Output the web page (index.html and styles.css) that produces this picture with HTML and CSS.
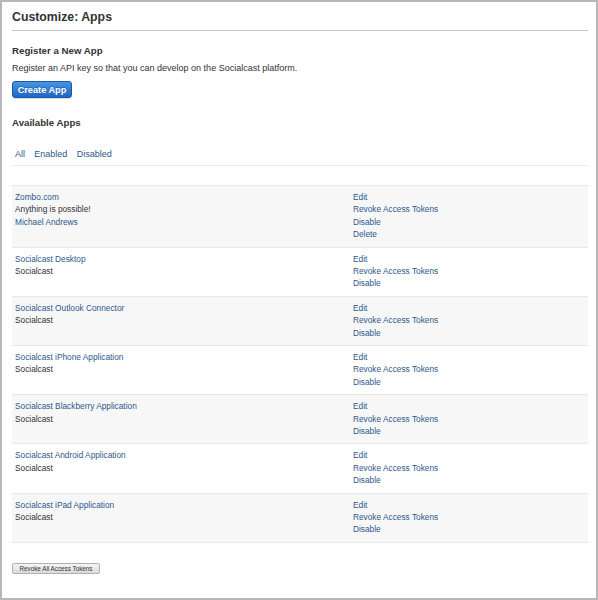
FILE: index.html
```html
<!DOCTYPE html>
<html>
<head>
<meta charset="utf-8">
<link rel="stylesheet" href="styles.css">
</head>
<body>
<div class="frame">
  <h1 class="title">Customize: Apps</h1>
  <h2 class="section first">Register a New App</h2>
  <p class="desc">Register an API key so that you can develop on the Socialcast platform.</p>
  <button class="btn-primary">Create App</button>
  <h2 class="section second">Available Apps</h2>
  <nav class="filters"><a href="#">All</a><a href="#">Enabled</a><a href="#">Disabled</a></nav>
  <div class="apps">
    <div class="app alt">
      <div class="info"><a href="#">Zombo.com</a><span>Anything is possible!</span><a href="#">Michael Andrews</a></div>
      <div class="actions"><a href="#">Edit</a><a href="#">Revoke Access Tokens</a><a href="#">Disable</a><a href="#">Delete</a></div>
    </div>
    <div class="app">
      <div class="info"><a href="#">Socialcast Desktop</a><span>Socialcast</span></div>
      <div class="actions"><a href="#">Edit</a><a href="#">Revoke Access Tokens</a><a href="#">Disable</a></div>
    </div>
    <div class="app alt">
      <div class="info"><a href="#">Socialcast Outlook Connector</a><span>Socialcast</span></div>
      <div class="actions"><a href="#">Edit</a><a href="#">Revoke Access Tokens</a><a href="#">Disable</a></div>
    </div>
    <div class="app">
      <div class="info"><a href="#">Socialcast iPhone Application</a><span>Socialcast</span></div>
      <div class="actions"><a href="#">Edit</a><a href="#">Revoke Access Tokens</a><a href="#">Disable</a></div>
    </div>
    <div class="app alt">
      <div class="info"><a href="#">Socialcast Blackberry Application</a><span>Socialcast</span></div>
      <div class="actions"><a href="#">Edit</a><a href="#">Revoke Access Tokens</a><a href="#">Disable</a></div>
    </div>
    <div class="app">
      <div class="info"><a href="#">Socialcast Android Application</a><span>Socialcast</span></div>
      <div class="actions"><a href="#">Edit</a><a href="#">Revoke Access Tokens</a><a href="#">Disable</a></div>
    </div>
    <div class="app alt">
      <div class="info"><a href="#">Socialcast iPad Application</a><span>Socialcast</span></div>
      <div class="actions"><a href="#">Edit</a><a href="#">Revoke Access Tokens</a><a href="#">Disable</a></div>
    </div>
  </div>
  <button class="btn-small">Revoke All Access Tokens</button>
</div>
</body>
</html>
```

FILE: styles.css
```css
html, body {
  margin: 0;
  padding: 0;
  background: #fff;
}
body {
  font-family: "Liberation Sans", Arial, Helvetica, sans-serif;
  color: #333;
  font-size: 9px;
  line-height: 12.4px;
}
.frame {
  box-sizing: border-box;
  width: 598px;
  height: 600px;
  border: 2px solid #b8b8b8;
  padding: 0 8px 0 10px;
  display: flex;
  flex-direction: column;
  align-items: flex-start;
}
a {
  color: #2d5889;
  text-decoration: none;
}
.title {
  align-self: stretch;
  margin: 0;
  padding: 7.5px 0 5.5px;
  font-size: 12.3px;
  line-height: 15px;
  font-weight: bold;
  color: #333;
  border-bottom: 1px solid #c9c9c9;
}
.section {
  margin: 0;
  font-size: 9.7px;
  line-height: 12px;
  font-weight: bold;
  color: #333;
}
.section.first { margin-top: 13.8px; }
.section.second { margin-top: 19px; }
.desc {
  margin: 5.7px 0 0;
}
.btn-primary {
  margin-top: 6px;
  height: 17.5px;
  width: 60px;
  padding: 0;
  font-family: inherit;
  font-size: 9.2px;
  font-weight: bold;
  color: #fff;
  text-shadow: 0 -1px 0 rgba(0,0,0,0.25);
  background: linear-gradient(#4795e3, #1e66c3);
  border: 1px solid #1a58a6;
  border-radius: 3px;
  box-shadow: 0 1px 1px rgba(0,0,0,0.15);
}
.filters {
  align-self: stretch;
  margin-top: 18.6px;
  padding: 0 0 4.5px 3px;
  border-bottom: 1px solid #ececec;
  display: flex;
  gap: 9.3px;
}
.apps {
  align-self: stretch;
  margin-top: 19px;
  display: flex;
  flex-direction: column;
  font-size: 8.3px;
}
.app {
  display: grid;
  grid-template-columns: 338px 1fr;
  padding: 5px 3px 6px;
  border-top: 1px solid #e9e9e9;
}
.app:last-child {
  border-bottom: 1px solid #e9e9e9;
}
.app.alt {
  background: #f7f7f7;
}
.info, .actions {
  display: flex;
  flex-direction: column;
  align-items: flex-start;
}
.btn-small {
  margin-top: 20px;
  height: 11.5px;
  width: 88px;
  padding: 0;
  font-family: inherit;
  font-size: 6.3px;
  line-height: 9px;
  color: #333;
  background: linear-gradient(#f6f6f6, #dadada);
  border: 1px solid #b0b0b0;
  border-radius: 2px;
}
```
